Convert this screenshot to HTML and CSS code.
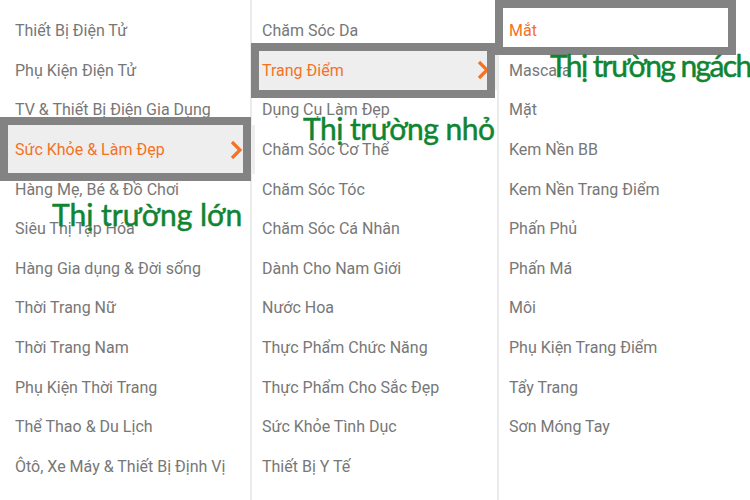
FILE: index.html
```html
<!DOCTYPE html>
<html lang="vi">
<head>
  <meta charset="UTF-8" />
  <meta name="viewport" content="width=device-width, initial-scale=1.0" />
  <title>Danh mục</title>
  <link rel="stylesheet" href="styles.css">
</head>
<body>

  <div class="menu">
    <ul class="col col-main">
      <li>Thiết Bị Điện Tử</li>
      <li>Phụ Kiện Điện Tử</li>
      <li>TV &amp; Thiết Bị Điện Gia Dụng</li>
      <li class="active box-main">Sức Khỏe &amp; Làm Đẹp
        <svg class="chev" viewBox="0 0 12 20"><polyline points="2,2 10,10 2,18" /></svg>
      </li>
      <li>Hàng Mẹ, Bé &amp; Đồ Chơi</li>
      <li>Siêu Thị Tạp Hóa</li>
      <li>Hàng Gia dụng &amp; Đời sống</li>
      <li>Thời Trang Nữ</li>
      <li>Thời Trang Nam</li>
      <li>Phụ Kiện Thời Trang</li>
      <li>Thể Thao &amp; Du Lịch</li>
      <li>Ôtô, Xe Máy &amp; Thiết Bị Định Vị</li>
    </ul>

    <ul class="col col-sub">
      <li>Chăm Sóc Da</li>
      <li class="active box-sub">Trang Điểm
        <svg class="chev" viewBox="0 0 12 20"><polyline points="2,2 10,10 2,18" /></svg>
      </li>
      <li>Dụng Cụ Làm Đẹp</li>
      <li>Chăm Sóc Cơ Thể</li>
      <li>Chăm Sóc Tóc</li>
      <li>Chăm Sóc Cá Nhân</li>
      <li>Dành Cho Nam Giới</li>
      <li>Nước Hoa</li>
      <li>Thực Phẩm Chức Năng</li>
      <li>Thực Phẩm Cho Sắc Đẹp</li>
      <li>Sức Khỏe Tình Dục</li>
      <li>Thiết Bị Y Tế</li>
    </ul>

    <ul class="col col-niche">
      <li class="picked box-niche">Mắt</li>
      <li>Mascara</li>
      <li>Mặt</li>
      <li>Kem Nền BB</li>
      <li>Kem Nền Trang Điểm</li>
      <li>Phấn Phủ</li>
      <li>Phấn Má</li>
      <li>Môi</li>
      <li>Phụ Kiện Trang Điểm</li>
      <li>Tẩy Trang</li>
      <li>Sơn Móng Tay</li>
    </ul>
  </div>

  <!-- annotations drawn on top of the menu -->
  <div class="note note-big">Thị trường lớn</div>
  <div class="note note-small">Thị trường nhỏ</div>
  <div class="note note-niche">Thị trường ngách</div>

</body>
</html>
```

FILE: styles.css
```css
* { box-sizing: border-box; margin: 0; padding: 0; }

body {
  position: relative;
  width: 750px;
  height: 500px;
  overflow: hidden;
  background: #fff;
  font-family: Roboto, 'Noto Sans', sans-serif;
}

.menu {
  display: flex;
  height: 500px;
}

.col {
  list-style: none;
  padding-top: 11px;
  background: #fff;
}

.col-main { flex: 0 0 250px; }

.col-sub {
  flex: 0 0 247px;
  border-left: 2px solid #ebebeb;
}

.col-niche {
  flex: 1;
  border-left: 2px solid #ebebeb;
}

.col li {
  position: relative;
  display: flex;
  align-items: center;
  justify-content: space-between;
  height: 39.6px;
  font-size: 16px;
  color: #777;
  white-space: nowrap;
}

.col-main li { padding: 0 8px 0 15px; }
.col-sub li { padding: 0 8px 0 10px; }
.col-niche li { padding: 0 10px; }

.active {
  color: #f57224 !important;
  background: #eee;
}

.picked { color: #f57224 !important; }

.chev {
  width: 12px;
  height: 20px;
  fill: none;
  stroke: #f57224;
  stroke-width: 3.2;
}

/* grey highlight frames */
.box-main::after,
.box-sub::after,
.box-niche::after {
  content: "";
  position: absolute;
  border: 8px solid #838383;
  z-index: 2;
}

.box-main { box-shadow: 0 0 0 5px #eee; }
.box-main::after { top: -13px; bottom: -12px; left: 0; right: -1px; }
.box-sub::after { top: -8px; bottom: -8px; left: -1px; right: 2px; }
.box-niche::after { top: -11px; bottom: -4px; left: -4px; right: 14px; }

.note {
  position: absolute;
  z-index: 5;
  font-family: Lato, 'Open Sans', sans-serif;
  font-size: 30px;
  line-height: 30px;
  color: #0f8532;
  -webkit-text-stroke: 0.5px #0f8532;
  white-space: nowrap;
}

.note-big { left: 52px; top: 199px; }
.note-small { left: 303px; top: 113px; letter-spacing: -0.5px; }
.note-niche { left: 550px; top: 50px; letter-spacing: -1.6px; }
```
